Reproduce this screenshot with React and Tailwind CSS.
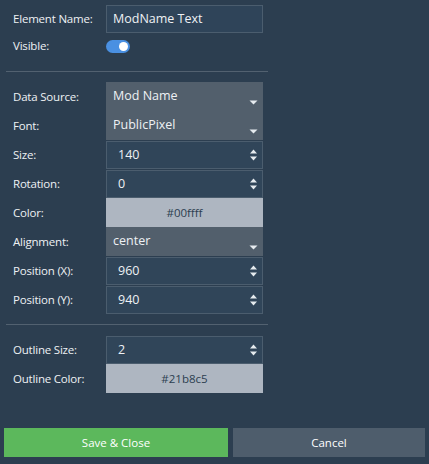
import React, { useState } from 'react';

const font = { fontFamily: '"Open Sans", "Noto Sans", sans-serif' };

function Label({ children }) {
  return (
    <div className="w-[106px] shrink-0 pl-[13px] whitespace-nowrap text-[11.5px] tracking-[-0.2px] text-[#eef1f4]">
      {children}
    </div>
  );
}

function Spin() {
  return (
    <svg width="9" height="13" viewBox="0 0 9 13" className="absolute right-[4px] top-1/2 -translate-y-1/2">
      <path d="M4.5 1 L8 5 L1 5 Z" fill="#e6ebef" />
      <path d="M1 8 L8 8 L4.5 12 Z" fill="#e6ebef" />
    </svg>
  );
}

function Caret() {
  return (
    <svg width="9" height="5" viewBox="0 0 9 5" className="absolute right-[5px] bottom-[6px]">
      <path d="M0.5 0.5 L8.5 0.5 L4.5 4.5 Z" fill="#e6ebef" />
    </svg>
  );
}

function NumberRow({ label, value }) {
  return (
    <div className="flex items-center h-[29px]">
      <Label>{label}</Label>
      <div className="relative w-[157px] h-[28px] mt-[1px] bg-[#304559] border border-[#4b5d6e] flex items-center pl-[11px] text-[12.5px] text-[#eef1f4]">
        {value}
        <Spin />
      </div>
    </div>
  );
}

function SelectRow({ label, value }) {
  return (
    <div className="flex items-center h-[29px]">
      <Label>{label}</Label>
      <div className="relative w-[157px] h-[29px] bg-[#525f6c] pl-[7px] flex items-center text-[12.5px] text-[#eef1f4]">
        {value}
        <Caret />
      </div>
    </div>
  );
}

function ColorRow({ label, value }) {
  return (
    <div className="flex items-center h-[29px]">
      <Label>{label}</Label>
      <div className="w-[157px] h-[29px] bg-[#aeb6c1] flex items-center justify-center text-[11.5px] text-[#2c3e50]">
        {value}
      </div>
    </div>
  );
}

export default function App() {
  const [visible, setVisible] = useState(true);

  return (
    <div className="w-[429px] h-[464px] bg-[#2c3e50] flex flex-col" style={font}>
      <div className="pt-[5px]">
        <div className="flex items-center h-[28px]">
          <Label>Element Name:</Label>
          <div className="w-[157px] h-[28px] bg-[#2f4459] border border-[#4b5d6e] flex items-center pl-[6px] text-[12.5px] text-[#eef1f4]">
            ModName Text
          </div>
        </div>
        <div className="flex items-center h-[26px]">
          <Label>Visible:</Label>
          <button
            onClick={() => setVisible(v => !v)}
            className={`w-[24px] h-[13px] rounded-full flex items-center px-[2px] ${visible ? 'bg-[#4a90e2] justify-end' : 'bg-[#6b7a89] justify-start'}`}
          >
            <span className="w-[9px] h-[9px] rounded-full bg-white" />
          </button>
        </div>
      </div>

      <div className="mx-[6px] mt-[12px] h-px w-[262px] bg-[#526170]" />

      <div className="mt-[10px] flex flex-col">
        <SelectRow label="Data Source:" value="Mod Name" />
        <SelectRow label="Font:" value="PublicPixel" />
        <NumberRow label="Size:" value="140" />
        <NumberRow label="Rotation:" value="0" />
        <ColorRow label="Color:" value="#00ffff" />
        <SelectRow label="Alignment:" value="center" />
        <NumberRow label="Position (X):" value="960" />
        <NumberRow label="Position (Y):" value="940" />
      </div>

      <div className="mx-[6px] mt-[10px] h-px w-[262px] bg-[#526170]" />

      <div className="mt-[10px] flex flex-col">
        <NumberRow label="Outline Size:" value="2" />
        <ColorRow label="Outline Color:" value="#21b8c5" />
      </div>

      <div className="mt-auto mb-[7px] flex gap-[5px] px-[4px]">
        <button className="w-[224px] h-[29px] bg-[#5cb85c] text-white text-[11.5px]">Save &amp; Close</button>
        <button className="flex-1 h-[29px] bg-[#4e5d6c] text-white text-[11.5px]">Cancel</button>
      </div>
    </div>
  );
}
